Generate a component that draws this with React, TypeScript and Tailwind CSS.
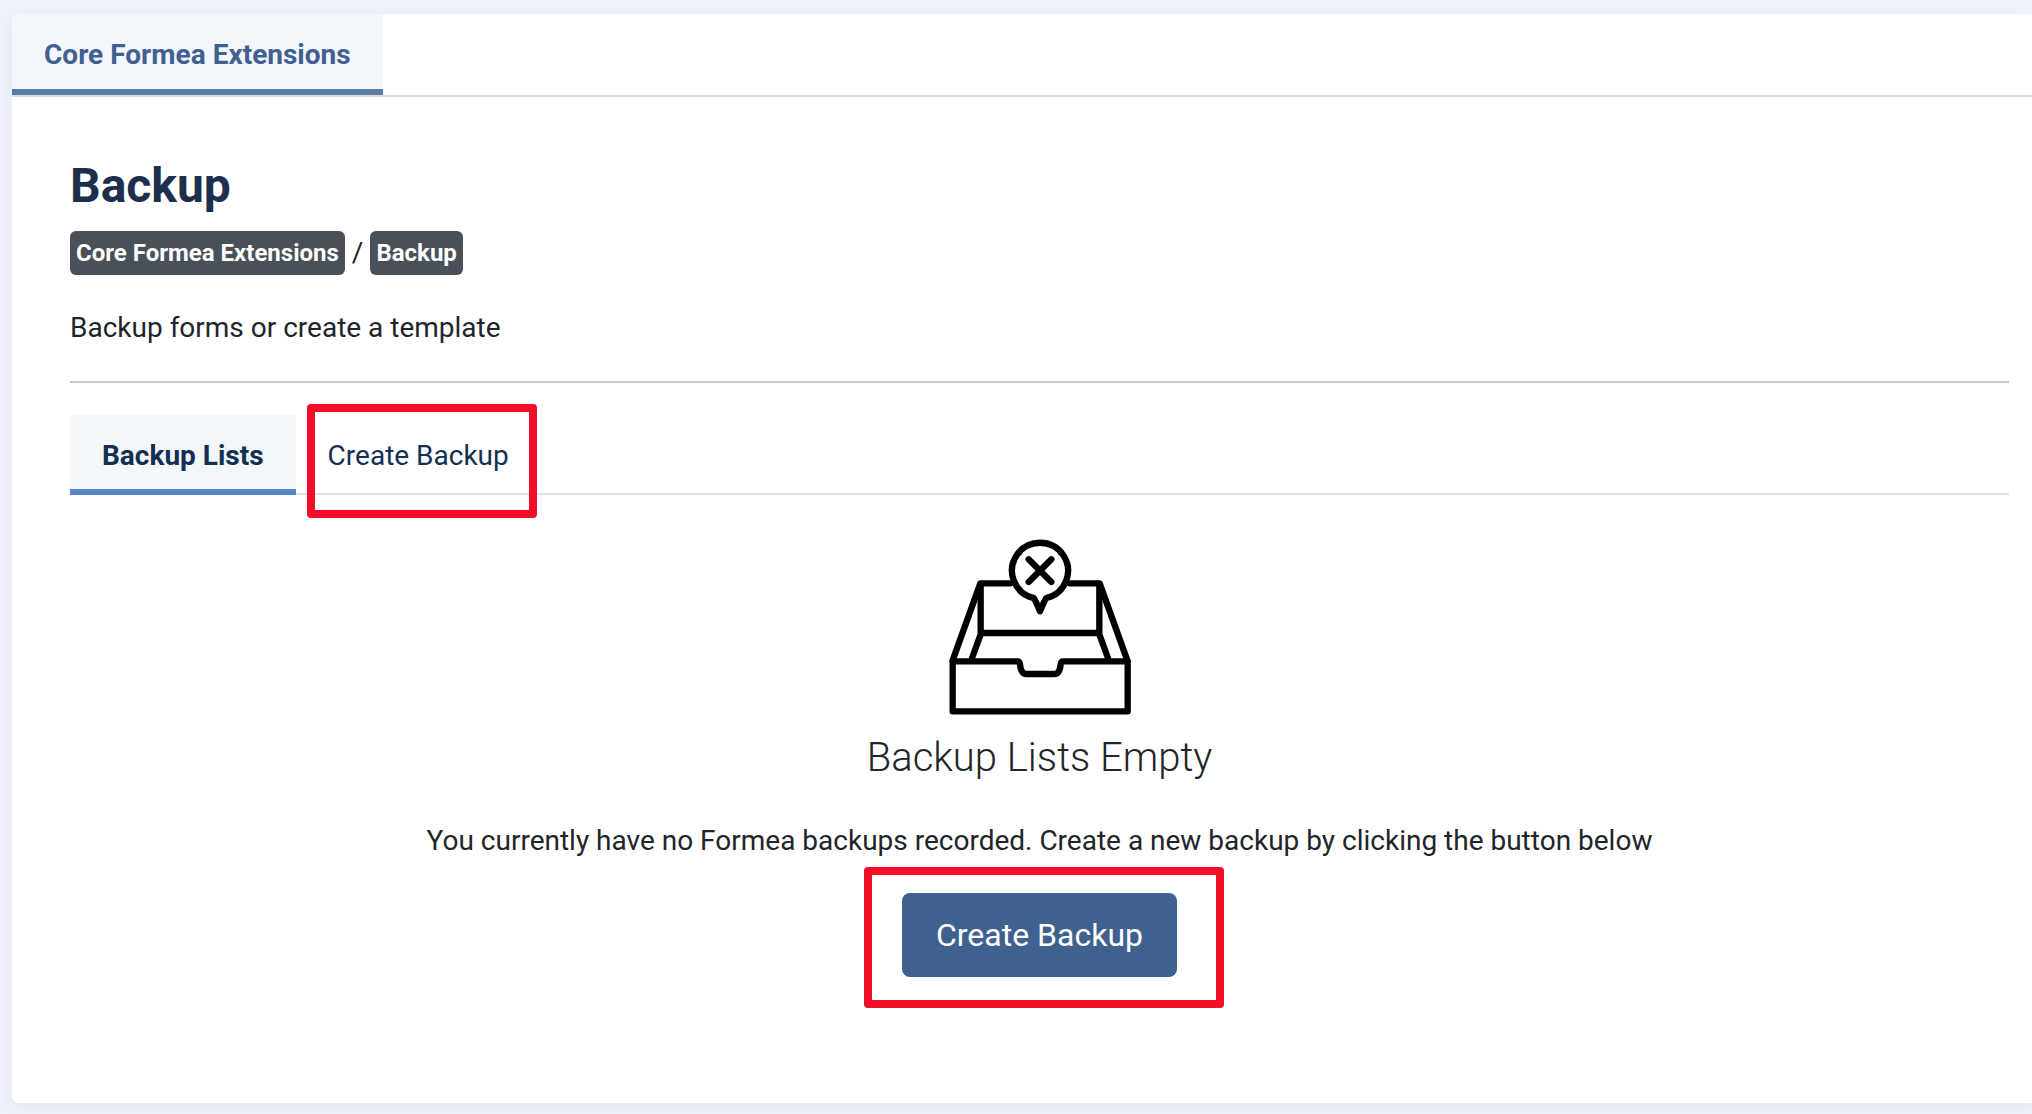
import { useState } from 'react';

const tabs = ['Backup Lists', 'Create Backup'];

function Highlight({ className }: { className: string }) {
  return <span aria-hidden="true" className={`pointer-events-none absolute rounded border-8 border-[#f00f27] ${className}`} />;
}

function EmptyTrayIcon() {
  return (
    <svg
      viewBox="84 54 546 528"
      className="mt-11 h-44 w-[182px]"
      fill="none"
      stroke="black"
      strokeWidth="19"
      strokeLinecap="round"
      strokeLinejoin="round"
      aria-hidden="true"
    >
      <path d="M95 421H290Q296 421 297 430Q300 459 316 459H400Q416 459 419 430Q420 421 426 421H620V571H95Z" />
      <path d="M95 418L178 187H268M446 187H536L619 418" />
      <path d="M179 190V336H535V190M179 340L152 414M535 340L562 414" />
      <path d="M338 231A84 84 0 1 1 376 231L357 271Z" stroke="none" fill="white" />
      <path d="M338 231A84 84 0 1 1 376 231Q371 237 357 271Q343 237 338 231" />
      <path d="M323 115L391 183M391 115L323 183" />
    </svg>
  );
}

export default function App() {
  const [active, setActive] = useState(tabs[0]);

  return (
    <div className="min-h-screen bg-[#eff2fb] pt-3.5 pb-[11px] pl-3 font-['Roboto',sans-serif] text-[28px] leading-[42px] text-[#212529]">
      <main className="rounded-l-md bg-white pb-[126px] shadow-[0_4px_16px_rgba(0,0,0,0.05)]">
        <nav className="flex border-b-2 border-[#dcdfe3]">
          <a href="#extensions" className="rounded-tl-md border-b-6 border-[#5c7ba6] bg-[#f3f7fb] px-8 pt-5 pb-[13px] font-bold text-[#415f91]">
            Core Formea Extensions
          </a>
        </nav>

        <div className="pt-[60px] pr-[23px] pl-[58px]">
          <h1 className="text-5xl leading-[58px] font-bold text-[#1c2f4c]">Backup</h1>
          <div className="mt-4 flex items-center gap-[7px]">
            <span className="rounded-md bg-[#495057] px-1.5 text-2xl leading-[44px] font-bold text-white">Core Formea Extensions</span>
            <span>/</span>
            <span className="rounded-md bg-[#495057] px-1.5 text-2xl leading-[44px] font-bold text-white">Backup</span>
          </div>
          <p className="mt-8">Backup forms or create a template</p>
          <hr className="mt-8 border-t-2 border-[#c8c8c9]" />

          <div role="tablist" className="mt-8 flex border-b-2 border-[#dfe1e3]">
            {tabs.map((tab) => (
              <button
                key={tab}
                role="tab"
                aria-selected={active === tab}
                onClick={() => setActive(tab)}
                className={`relative -mb-0.5 rounded-t border-b-6 px-8 pt-5 pb-3 text-[#132f53] ${
                  active === tab ? 'border-[#5585c5] bg-[#f3f7fa] font-bold' : 'border-transparent'
                }`}
              >
                {tab}
                {tab === 'Create Backup' && <Highlight className="-top-[11px] right-1 -bottom-[29px] left-[11px]" />}
              </button>
            ))}
          </div>

          <section className="flex flex-col items-center text-center">
            <EmptyTrayIcon />
            <h2 className="mt-[19px] text-[40px] leading-[48px] font-light">Backup Lists Empty</h2>
            <p className="mt-[38px]">
              You currently have no Formea backups recorded. Create a new backup by clicking the button below
            </p>
            <div className="relative mt-[31px]">
              <button className="block rounded-lg bg-[#3f618f] px-[34px] py-[18px] text-[32px] leading-[48px] text-white">
                Create Backup
              </button>
              <Highlight className="-top-[26px] -right-[47px] -bottom-[31px] -left-[38px]" />
            </div>
          </section>
        </div>
      </main>
    </div>
  );
}
